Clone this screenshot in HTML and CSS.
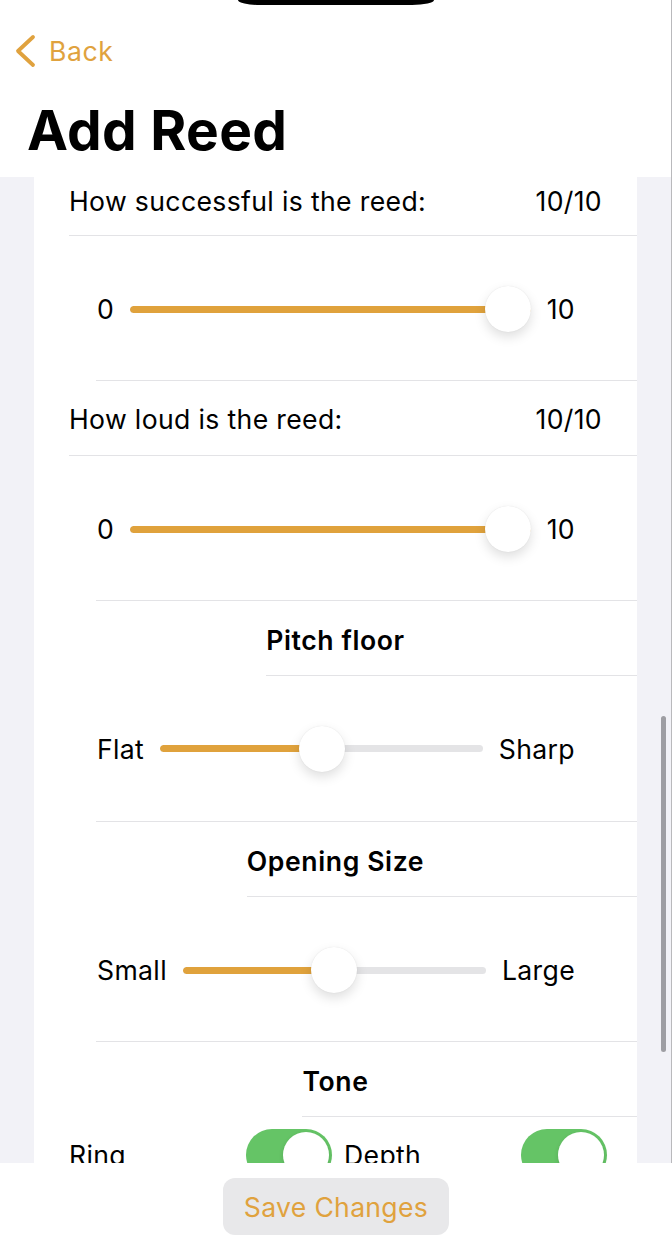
FILE: index.html
```html
<!DOCTYPE html>
<html lang="en">
<head>
<meta charset="utf-8">
<title>Add Reed</title>
<link rel="stylesheet" href="styles.css">
</head>
<body>
<div class="screen">
  <div class="notch"></div>
  <header class="nav">
    <a class="back">
      <svg class="chev" width="24" height="36" viewBox="0 0 24 36"><path d="M21 4 L6 18 L21 32" fill="none" stroke="currentColor" stroke-width="3.8" stroke-linecap="round" stroke-linejoin="round"/></svg>
      <span>Back</span>
    </a>
    <h1 class="title">Add Reed</h1>
  </header>
  <main class="scroll">
    <section class="card">
      <div class="text-row first"><span>How successful is the reed:</span><span>10/10</span></div>
      <div class="slider-row">
        <span>0</span>
        <div class="slider"><div class="track"><div class="fill" style="width:100%"></div></div><div class="thumb" style="left:calc((100% - 46px) * 1)"></div></div>
        <span>10</span>
      </div>
      <div class="text-row"><span>How loud is the reed:</span><span>10/10</span></div>
      <div class="slider-row">
        <span>0</span>
        <div class="slider"><div class="track"><div class="fill" style="width:100%"></div></div><div class="thumb" style="left:calc((100% - 46px) * 1)"></div></div>
        <span>10</span>
      </div>
      <div class="head-row"><span class="head-text">Pitch floor</span><span class="head-line"></span></div>
      <div class="slider-row tall">
        <span>Flat</span>
        <div class="slider"><div class="track"><div class="fill" style="width:50%"></div></div><div class="thumb" style="left:calc((100% - 46px) * 0.5)"></div></div>
        <span>Sharp</span>
      </div>
      <div class="head-row"><span class="head-text">Opening Size</span><span class="head-line"></span></div>
      <div class="slider-row">
        <span>Small</span>
        <div class="slider"><div class="track"><div class="fill" style="width:50%"></div></div><div class="thumb" style="left:calc((100% - 46px) * 0.5)"></div></div>
        <span>Large</span>
      </div>
      <div class="head-row"><span class="head-text">Tone</span><span class="head-line"></span></div>
      <div class="toggle-row">
        <div class="toggle-cell"><span>Ring</span><span class="switch"><span class="knob"></span></span></div>
        <div class="toggle-cell"><span>Depth</span><span class="switch"><span class="knob"></span></span></div>
      </div>
    </section>
    <div class="scrollbar"></div>
  </main>
  <footer class="bottom">
    <button class="save">Save Changes</button>
  </footer>
</div>
</body>
</html>
```

FILE: styles.css
```css
* { box-sizing: border-box; }
html, body { margin: 0; padding: 0; }
body {
  width: 672px;
  height: 1242px;
  overflow: hidden;
  background: #fff;
  font-family: Inter, "Noto Sans", sans-serif;
  color: #000;
}
.screen {
  position: relative;
  width: 672px;
  height: 1242px;
  display: flex;
  flex-direction: column;
  overflow: hidden;
}
.screen::after {
  content: "";
  position: absolute;
  top: 0;
  right: 0;
  width: 1px;
  height: 100%;
  background: #b9b9bc;
}
.notch {
  position: absolute;
  top: 0;
  left: 238px;
  width: 196px;
  height: 5px;
  background: #000;
  border-radius: 0 0 22px 22px / 0 0 5px 5px;
  z-index: 3;
}
.nav {
  height: 177px;
  flex: none;
  background: #fff;
  padding-top: 33px;
}
.back {
  display: flex;
  align-items: center;
  height: 36px;
  padding-left: 12px;
  gap: 13px;
  color: #e0a23e;
  font-size: 26.6px;
  line-height: 36px;
  letter-spacing: 0.6px;
}
.chev { display: block; }
.title {
  margin: 31px 0 0 0;
  padding-left: 27px;
  font-size: 55px;
  line-height: 60px;
  font-weight: 700;
  letter-spacing: 0.3px;
}
.scroll {
  position: relative;
  flex: 1;
  background: #f2f2f7;
  overflow: hidden;
  padding: 0 35px 0 34px;
}
.card {
  background: #fff;
  font-size: 26.6px;
  line-height: 34px;
  letter-spacing: 0.35px;
}
.text-row {
  height: 75px;
  margin-left: 35px;
  padding: 2px 35px 0 0;
  display: flex;
  justify-content: space-between;
  align-items: center;
  border-bottom: 1px solid #e3e3e6;
}
.text-row.first {
  height: 59px;
  padding: 0 35px 10px 0;
}
.slider-row {
  height: 145px;
  margin-left: 62px;
  padding: 2px 62px 0 1px;
  display: flex;
  align-items: center;
  gap: 16px;
  border-bottom: 1px solid #e3e3e6;
}
.slider-row.tall { height: 146px; padding-top: 0; }
.slider {
  position: relative;
  flex: 1;
  height: 46px;
  display: flex;
  align-items: center;
}
.track {
  width: 100%;
  height: 7px;
  border-radius: 4px;
  background: #e4e4e6;
  overflow: hidden;
}
.fill {
  height: 100%;
  background: #e0a23c;
  border-radius: 4px;
}
.thumb {
  position: absolute;
  top: 0;
  width: 46px;
  height: 46px;
  border-radius: 50%;
  background: #fff;
  box-shadow: 0 0 1px rgba(0,0,0,0.12), 0 5px 12px rgba(0,0,0,0.13);
}
.head-row {
  height: 75px;
  display: grid;
  grid-template-columns: 1fr auto 1fr;
  font-weight: 600;
  letter-spacing: 0.6px;
}
.head-text {
  grid-column: 2;
  grid-row: 1;
  align-self: center;
  padding-top: 2px;
}
.head-line {
  grid-column: 2 / 4;
  grid-row: 1;
  border-bottom: 1px solid #e3e3e6;
}
.toggle-row {
  height: 75px;
  margin-left: 35px;
  padding-right: 30px;
  display: grid;
  grid-template-columns: 1fr 1fr;
  gap: 12px;
}
.toggle-cell {
  display: flex;
  justify-content: space-between;
  align-items: center;
  padding-top: 1px;
}
.switch {
  position: relative;
  width: 86px;
  height: 52px;
  border-radius: 26px;
  background: #65c466;
  display: flex;
  justify-content: flex-end;
  align-items: center;
  padding-right: 3px;
}
.knob {
  width: 46px;
  height: 46px;
  border-radius: 50%;
  background: #fff;
  box-shadow: 0 2px 5px rgba(0,0,0,0.12);
}
.scrollbar {
  position: absolute;
  right: 6px;
  top: 539px;
  width: 5px;
  height: 336px;
  border-radius: 3px;
  background: #9e9ea3;
}
.bottom {
  height: 79px;
  flex: none;
  background: #fff;
  display: flex;
  justify-content: center;
  align-items: flex-start;
  padding-top: 15px;
  position: relative;
  z-index: 2;
}
.save {
  width: 226px;
  height: 57px;
  border: none;
  border-radius: 12px;
  background: #e8e8ea;
  color: #e0a23e;
  font-family: Inter, "Noto Sans", sans-serif;
  font-size: 26.6px;
  letter-spacing: 0.3px;
  padding: 0;
}
```
